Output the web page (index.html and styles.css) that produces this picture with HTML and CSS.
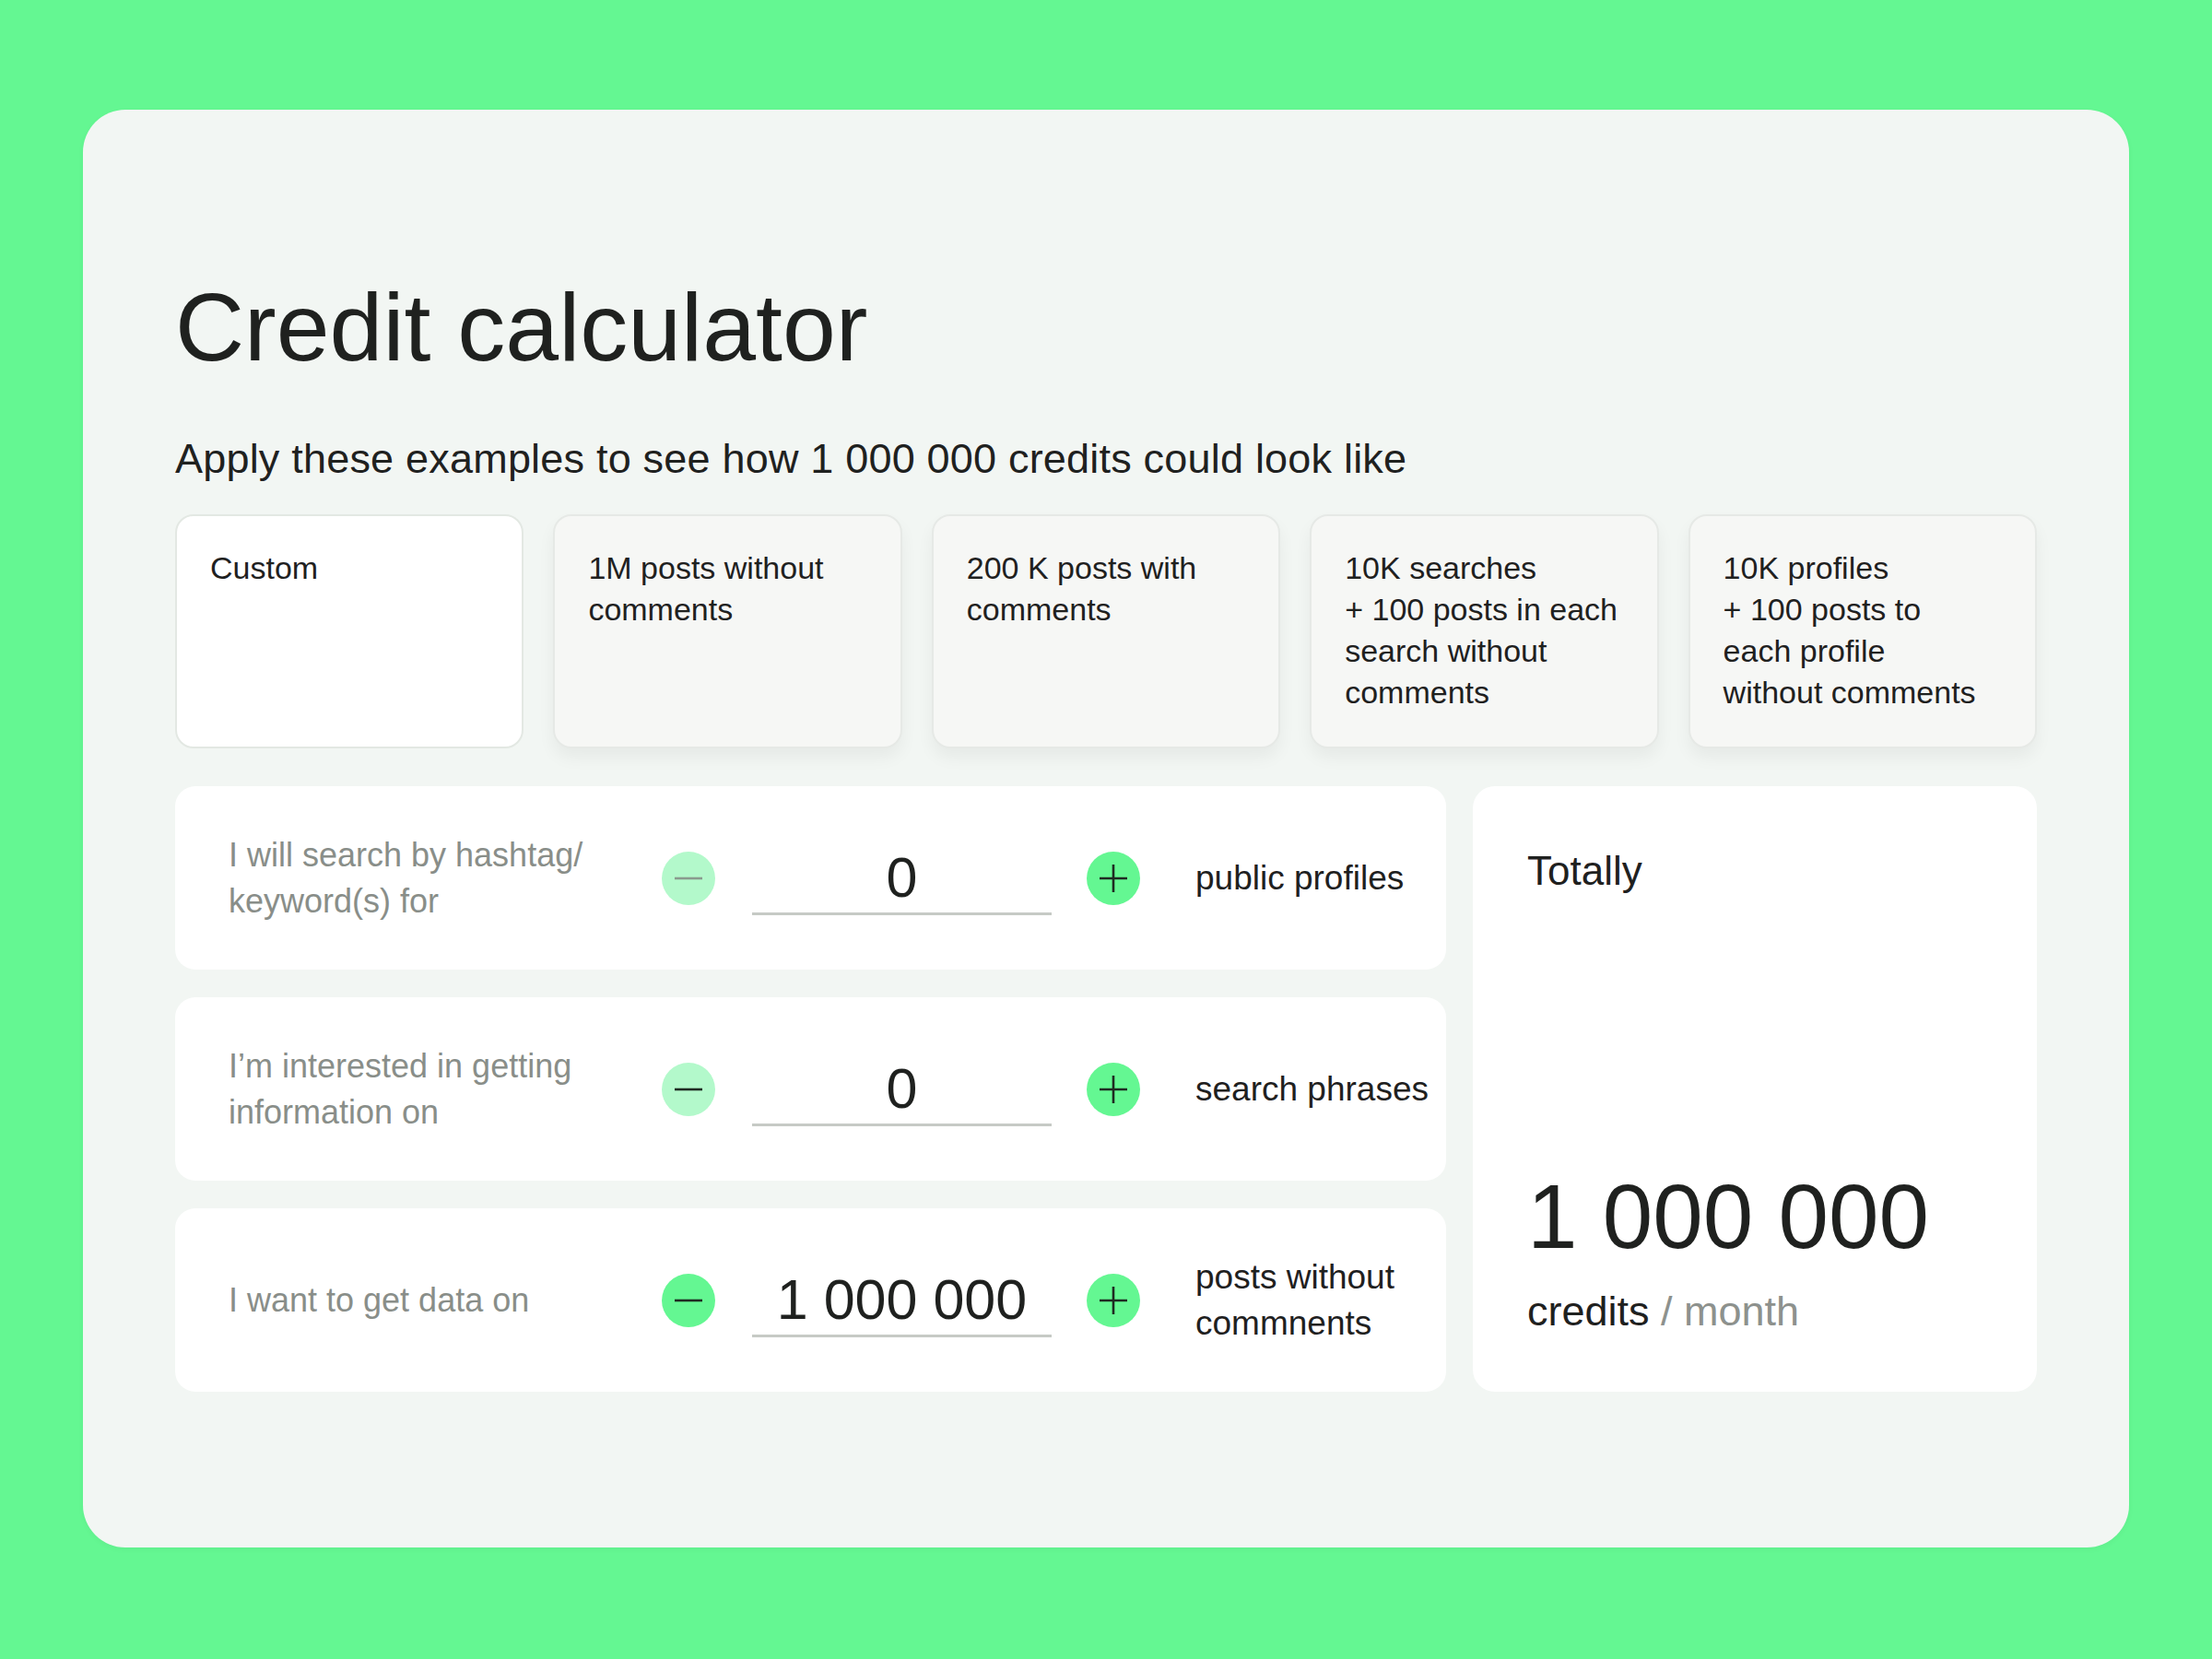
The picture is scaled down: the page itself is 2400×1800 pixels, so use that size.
FILE: index.html
```html
<!DOCTYPE html>
<html lang="en">
<head>
<meta charset="utf-8">
<title>Credit calculator</title>
<link rel="stylesheet" href="styles.css">
</head>
<body>
<main class="panel">
  <h1 class="title">Credit calculator</h1>
  <p class="subtitle">Apply these examples to see how 1 000 000 credits could look like</p>

  <div class="examples">
    <div class="example is-active">Custom</div>
    <div class="example">1M posts without<br>comments</div>
    <div class="example">200 K posts with<br>comments</div>
    <div class="example">10K searches<br>+ 100 posts in each<br>search without<br>comments</div>
    <div class="example">10K profiles<br>+ 100 posts to<br>each profile<br>without comments</div>
  </div>

  <div class="calc">
    <div class="rows">
      <div class="row">
        <div class="label">I will search by hashtag/<br>keyword(s) for</div>
        <button class="step is-disabled" aria-label="decrease">
          <svg viewBox="0 0 30 30" width="30" height="30"><path d="M0 15H30"/></svg>
        </button>
        <div class="field">0</div>
        <button class="step" aria-label="increase">
          <svg viewBox="0 0 30 30" width="30" height="30"><path d="M0 15H30M15 0V30"/></svg>
        </button>
        <div class="unit">public profiles</div>
      </div>
      <div class="row">
        <div class="label">I’m interested in getting<br>information on</div>
        <button class="step is-soft" aria-label="decrease">
          <svg viewBox="0 0 30 30" width="30" height="30"><path d="M0 15H30"/></svg>
        </button>
        <div class="field">0</div>
        <button class="step" aria-label="increase">
          <svg viewBox="0 0 30 30" width="30" height="30"><path d="M0 15H30M15 0V30"/></svg>
        </button>
        <div class="unit">search phrases</div>
      </div>
      <div class="row">
        <div class="label">I want to get data on</div>
        <button class="step" aria-label="decrease">
          <svg viewBox="0 0 30 30" width="30" height="30"><path d="M0 15H30"/></svg>
        </button>
        <div class="field">1 000 000</div>
        <button class="step" aria-label="increase">
          <svg viewBox="0 0 30 30" width="30" height="30"><path d="M0 15H30M15 0V30"/></svg>
        </button>
        <div class="unit">posts without<br>commnents</div>
      </div>
    </div>

    <div class="total">
      <div class="total-label">Totally</div>
      <div class="total-bottom">
        <div class="total-value">1 000 000</div>
        <div class="total-unit">credits <span class="muted">/ month</span></div>
      </div>
    </div>
  </div>
</main>
</body>
</html>
```

FILE: styles.css
```css
* { box-sizing: border-box; }

html, body {
  margin: 0;
  padding: 0;
}

body {
  background: #64f792;
  font-family: "Liberation Sans", Arial, sans-serif;
  color: #1f211f;
  padding: 119px 90px 0 90px;
  min-height: 1800px;
}

.panel {
  width: 2220px;
  height: 1560px;
  background: #f2f6f3;
  border-radius: 46px;
  padding: 185px 100px 0 100px;
  box-shadow: 0 2px 6px rgba(0, 0, 0, 0.04);
}

.title {
  margin: 0;
  font-size: 104px;
  line-height: 103px;
  font-weight: 400;
  letter-spacing: 0;
}

.subtitle {
  margin: 68px 0 0 0;
  font-size: 45px;
  line-height: 45px;
  font-weight: 400;
  letter-spacing: 0.2px;
}

.examples {
  margin-top: 38px;
  display: grid;
  grid-template-columns: repeat(5, 1fr);
  column-gap: 32px;
}

.example {
  height: 254px;
  font-size: 34px;
  line-height: 45px;
  color: #1f211f;
  background: #f6f7f5;
  border: 2px solid #e6e9e6;
  border-radius: 20px;
  padding: 34px 20px 0 36px;
  white-space: nowrap;
  box-shadow: 0 10px 18px rgba(0, 0, 0, 0.05);
  cursor: pointer;
}

.example.is-active {
  background: #ffffff;
  box-shadow: none;
  border-color: #e3e8e3;
}

.calc {
  margin-top: 41px;
  display: grid;
  grid-template-columns: 1379px 1fr;
  column-gap: 29px;
}

.rows {
  display: flex;
  flex-direction: column;
  gap: 30px;
}

.row {
  height: 199px;
  background: #ffffff;
  border-radius: 22px;
  display: flex;
  align-items: center;
  padding-left: 58px;
}

.label {
  width: 412px;
  margin-right: 58px;
  font-size: 36px;
  line-height: 50px;
  color: #898e89;
  white-space: nowrap;
}

.step {
  width: 58px;
  height: 58px;
  flex: none;
  border: none;
  padding: 0;
  border-radius: 50%;
  background: #64f792;
  display: flex;
  align-items: center;
  justify-content: center;
}

.step svg {
  display: block;
  fill: none;
  stroke: #1f2a22;
  stroke-width: 2.6;
}

.step.is-disabled {
  background: #b3f9cb;
}

.step.is-disabled svg {
  stroke: #8a9a8e;
}

.step.is-soft {
  background: #b3f9cb;
}

.field {
  width: 325px;
  height: 80px;
  margin: 0 38px 0 40px;
  border-bottom: 3px solid #c6cac5;
  text-align: center;
  font-size: 61px;
  line-height: 79px;
  color: #1f211f;
  white-space: nowrap;
}

.unit {
  margin-left: 60px;
  font-size: 37px;
  line-height: 50px;
  color: #1f211f;
  white-space: nowrap;
}

.total {
  background: #ffffff;
  border-radius: 24px;
  padding: 70px 40px 65px 59px;
  display: flex;
  flex-direction: column;
  justify-content: space-between;
}

.total-label {
  font-size: 44px;
  line-height: 44px;
}

.total-value {
  font-size: 98px;
  line-height: 98px;
  white-space: nowrap;
}

.total-unit {
  margin-top: 31px;
  font-size: 45px;
  line-height: 45px;
  white-space: nowrap;
}

.muted {
  color: #8d918d;
}
```
